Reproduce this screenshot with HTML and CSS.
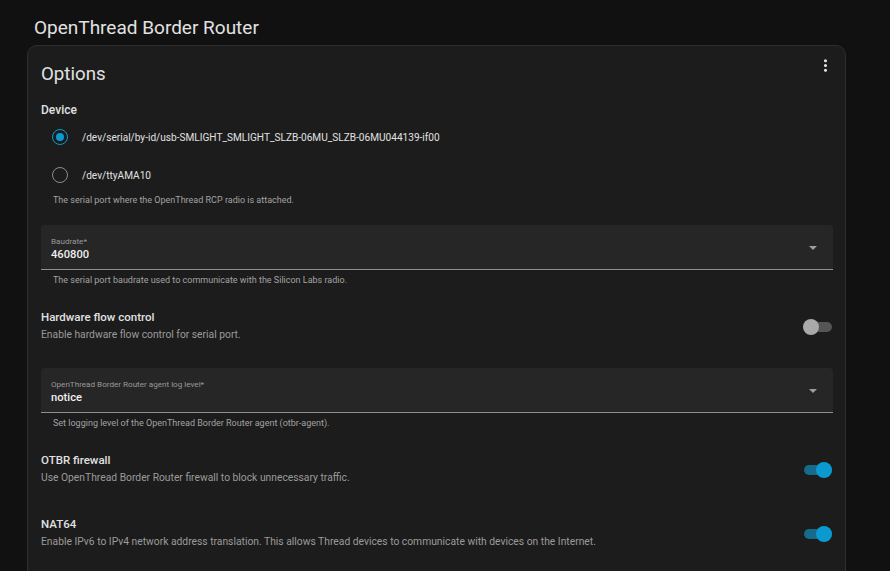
FILE: index.html
```html
<!DOCTYPE html>
<html lang="en">
<head>
<meta charset="utf-8">
<title>OpenThread Border Router</title>
<link rel="stylesheet" href="styles.css">
</head>
<body>
<main class="page">
  <h1 class="page-title">OpenThread Border Router</h1>
  <section class="card">
    <div class="card-header">
      <h2 class="card-title">Options</h2>
      <button class="menu-btn" aria-label="Menu">
        <svg viewBox="0 0 24 24" width="19" height="19"><path fill="#e1e1e1" d="M12,16A2,2 0 0,1 14,18A2,2 0 0,1 12,20A2,2 0 0,1 10,18A2,2 0 0,1 12,16M12,10A2,2 0 0,1 14,12A2,2 0 0,1 12,14A2,2 0 0,1 10,12A2,2 0 0,1 12,10M12,4A2,2 0 0,1 14,6A2,2 0 0,1 12,8A2,2 0 0,1 10,6A2,2 0 0,1 12,4Z"/></svg>
      </button>
    </div>
    <div class="card-content">
      <div class="group-label">Device</div>
      <div class="radio-row">
        <span class="radio checked"></span>
        <span class="radio-text">/dev/serial/by-id/usb-SMLIGHT_SMLIGHT_SLZB-06MU_SLZB-06MU044139-if00</span>
      </div>
      <div class="radio-row">
        <span class="radio"></span>
        <span class="radio-text">/dev/ttyAMA10</span>
      </div>
      <div class="helper helper-radio">The serial port where the OpenThread RCP radio is attached.</div>

      <div class="select select-first">
        <div class="select-body">
          <div class="select-label">Baudrate*</div>
          <div class="select-value">460800</div>
        </div>
        <span class="arrow"></span>
      </div>
      <div class="helper">The serial port baudrate used to communicate with the Silicon Labs radio.</div>

      <div class="toggle-row row-hw">
        <div class="toggle-text">
          <div class="toggle-title">Hardware flow control</div>
          <div class="toggle-desc">Enable hardware flow control for serial port.</div>
        </div>
        <span class="switch"><span class="track"></span><span class="thumb"></span></span>
      </div>

      <div class="select select-second">
        <div class="select-body">
          <div class="select-label">OpenThread Border Router agent log level*</div>
          <div class="select-value">notice</div>
        </div>
        <span class="arrow"></span>
      </div>
      <div class="helper">Set logging level of the OpenThread Border Router agent (otbr-agent).</div>

      <div class="toggle-row row-fw">
        <div class="toggle-text">
          <div class="toggle-title">OTBR firewall</div>
          <div class="toggle-desc">Use OpenThread Border Router firewall to block unnecessary traffic.</div>
        </div>
        <span class="switch on"><span class="track"></span><span class="thumb"></span></span>
      </div>

      <div class="toggle-row row-nat">
        <div class="toggle-text">
          <div class="toggle-title">NAT64</div>
          <div class="toggle-desc">Enable IPv6 to IPv4 network address translation. This allows Thread devices to communicate with devices on the Internet.</div>
        </div>
        <span class="switch on"><span class="track"></span><span class="thumb"></span></span>
      </div>
    </div>
  </section>
</main>
</body>
</html>
```

FILE: styles.css
```css
* { box-sizing: border-box; }

html, body {
  margin: 0;
  padding: 0;
  background: #111111;
  height: 100%;
  overflow: hidden;
}

body {
  font-family: Roboto, "Noto Sans", "Liberation Sans", sans-serif;
  color: #e1e1e1;
}

.page {
  padding: 0 44px 0 27px;
}

.page-title {
  margin: 0;
  padding: 15px 0 0 7px;
  font-size: 19px;
  line-height: 25px;
  font-weight: 400;
  color: #e1e1e1;
  height: 45px;
}

.card {
  background: #1c1c1c;
  border: 1px solid #2e2e2e;
  border-radius: 10px;
  height: 560px;
}

.card-header {
  display: flex;
  justify-content: space-between;
  align-items: flex-start;
  padding: 16px 10px 0 13px;
  height: 40px;
}

.card-title {
  margin: 0;
  font-size: 18.7px;
  line-height: 24px;
  font-weight: 400;
  color: #e1e1e1;
}

.menu-btn {
  background: none;
  border: 0;
  padding: 0;
  margin-top: -6px;
  width: 19px;
  height: 19px;
  display: block;
}
.menu-btn svg { display: block; }

.card-content {
  padding: 0 12px 0 13px;
  display: flex;
  flex-direction: column;
}

.group-label {
  margin-top: 16px;
  font-size: 12px;
  line-height: 16px;
  font-weight: 500;
  color: #e1e1e1;
}

.radio-row {
  display: flex;
  align-items: center;
  height: 38px;
  padding-left: 11px;
}
.radio-row:first-of-type { margin-top: 3px; }

.radio {
  width: 16px;
  height: 16px;
  border-radius: 50%;
  border: 1.5px solid #8c8c8c;
  display: flex;
  align-items: center;
  justify-content: center;
  flex: none;
}
.radio.checked { border-color: #0a9ad0; }
.radio.checked::after {
  content: "";
  width: 8px;
  height: 8px;
  border-radius: 50%;
  background: #0a9ad0;
}

.radio-text {
  margin-left: 14px;
  font-size: 10.1px;
  font-weight: 400;
  color: #e1e1e1;
}

.helper {
  font-size: 9px;
  line-height: 12px;
  color: #a3a3a3;
  padding-left: 12px;
  margin-top: 4px;
}
.helper-radio { margin-top: 0; }

.select {
  display: flex;
  align-items: center;
  justify-content: space-between;
  height: 45px;
  background: #262626;
  border-radius: 4px 4px 0 0;
  border-bottom: 1px solid #8f8f8f;
  padding: 0 16px 0 10px;
}
.select-first { margin-top: 19px; }
.select-second { margin-top: 25px; }

.select-body {
  display: flex;
  flex-direction: column;
  padding-top: 2px;
}
.select-label {
  font-size: 8.1px;
  line-height: 12px;
  color: #9a9a9a;
}
.select-value {
  font-size: 11.2px;
  line-height: 15px;
  font-weight: 500;
  color: #f0f0f0;
}

.arrow {
  width: 0;
  height: 0;
  border-left: 4px solid transparent;
  border-right: 4px solid transparent;
  border-top: 4px solid #9e9e9e;
  margin-top: 1px;
}

.toggle-row {
  display: flex;
  align-items: center;
  justify-content: space-between;
}
.row-hw { margin-top: 23px; }
.row-fw { margin-top: 23px; }
.row-nat { margin-top: 30px; }

.toggle-title {
  font-size: 11.5px;
  line-height: 17px;
  font-weight: 500;
  color: #e1e1e1;
}
.toggle-desc {
  font-size: 10.3px;
  line-height: 17px;
  color: #9b9b9b;
}

.switch {
  position: relative;
  width: 29px;
  height: 16px;
  flex: none;
  margin-right: 1px;
  margin-top: 2px;
}
.switch .track {
  position: absolute;
  left: 1px;
  right: 0;
  top: 3px;
  height: 10px;
  border-radius: 5px;
  background: #555555;
}
.switch .thumb {
  position: absolute;
  left: 0;
  top: 0;
  width: 16px;
  height: 16px;
  border-radius: 50%;
  background: #a9a9a9;
}
.switch.on .track { background: #176b8a; }
.switch.on .thumb {
  left: 13px;
  background: #0a9ad0;
}
```
